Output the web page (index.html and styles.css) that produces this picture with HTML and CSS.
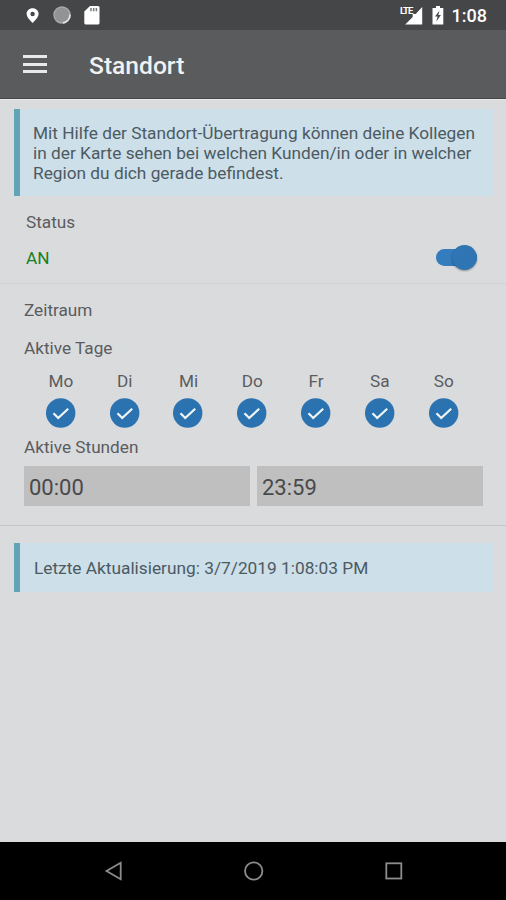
FILE: index.html
```html
<!DOCTYPE html>
<html lang="de">
<head>
<meta charset="utf-8">
<title>Standort</title>
<link rel="stylesheet" href="styles.css">
</head>
<body>
<svg class="defs" width="0" height="0" aria-hidden="true">
  <symbol id="check" viewBox="0 0 30 30"><circle cx="14.700" cy="15" r="14.700" fill="#2b72b0"/><path d="M7.500 15.200l4.700 4.800 10-9.300" fill="none" stroke="#f1f5f8" stroke-width="2.200"/></symbol>
</svg>
<div class="screen">
  <div class="statusbar">
    <svg class="status-left" width="120" height="30" viewBox="0 0 120 30">
      <path fill="#fff" fill-rule="evenodd" d="M32.600 8.200c-3.500 0-6 2.500-6 5.600 0 4 6 9.200 6 9.200s6-5.200 6-9.200c0-3.100-2.500-5.600-6-5.600zm0 3.600a2.200 2.200 0 1 1 0 4.400a2.200 2.200 0 0 1 0-4.400z"/>
      <circle cx="62" cy="15" r="8" fill="#929394"/>
      <circle cx="62" cy="15" r="8" fill="none" stroke="#a9aaaa" stroke-width="1.400"/>
      <path d="M70 14.500a8 8 0 0 1-7 8.400" fill="none" stroke="#e4e4e4" stroke-width="1.600"/>
      <path fill="#fff" d="M90 6h8q1.500 0 1.500 1.500v15.500q0 1.600-1.600 1.600H86q-1.700 0-1.700-1.600V11.500z"/>
      <path d="M91 8v3.200M93.700 8v3.200M96.400 8v3.200" stroke="#77787a" stroke-width="1.500"/>
    </svg>
    <div class="status-right">
      <span class="lte">LTE</span>
      <svg width="48" height="30" viewBox="0 0 48 30">
        <path fill="#fff" d="M21.200 7v17.500H4.200L11.700 17V14h3z"/>
        <path fill="#fff" d="M35 6h4v2h3.300v16.500H31.500V8H35z"/>
        <path fill="#454648" d="M38.500 10.500l-4.500 6h2.600l-1.300 5 4.600-6.500h-2.600z"/>
      </svg>
      <span class="clock">1:08</span>
    </div>
  </div>
  <header class="appbar">
    <div class="menu"><i></i><i></i><i></i></div>
    <h1>Standort</h1>
  </header>
  <main>
    <div class="note intro">Mit Hilfe der Standort-Übertragung können deine Kollegen<br>in der Karte sehen bei welchen Kunden/in oder in welcher<br>Region du dich gerade befindest.</div>
    <section class="status">
      <div class="label">Status</div>
      <div class="toggle-row"><span class="on">AN</span><span class="switch"></span></div>
    </section>
    <section class="period">
      <div class="label zeitraum">Zeitraum</div>
      <div class="label tage">Aktive Tage</div>
      <div class="days">
        <div class="day"><span>Mo</span><svg><use href="#check"/></svg></div>
        <div class="day"><span>Di</span><svg><use href="#check"/></svg></div>
        <div class="day"><span>Mi</span><svg><use href="#check"/></svg></div>
        <div class="day"><span>Do</span><svg><use href="#check"/></svg></div>
        <div class="day"><span>Fr</span><svg><use href="#check"/></svg></div>
        <div class="day"><span>Sa</span><svg><use href="#check"/></svg></div>
        <div class="day"><span>So</span><svg><use href="#check"/></svg></div>
      </div>
      <div class="label stunden">Aktive Stunden</div>
      <div class="hours"><div>00:00</div><div>23:59</div></div>
    </section>
    <div class="note update">Letzte Aktualisierung: 3/7/2019 1:08:03 PM</div>
  </main>
  <nav>
    <svg width="506" height="58" viewBox="0 0 506 58" fill="none" stroke="#8c8c8c" stroke-width="1.800">
      <path d="M120.700 20.700v16.600L106.500 29z"/>
      <circle cx="253.700" cy="29" r="8.700"/>
      <rect x="386.300" y="21.300" width="15" height="15.200"/>
    </svg>
  </nav>
</div>
</body>
</html>
```
FILE: styles.css
```css
* { box-sizing: border-box; }
body { margin: 0; font-family: Roboto, "Liberation Sans", sans-serif; background: #dadbdd; }
svg { display: block; }
.defs { position: absolute; }
.screen { width: 506px; height: 900px; display: flex; flex-direction: column; overflow: hidden; font-size: 17.2px; line-height: 20px; color: #5a5c5f; }
.statusbar { height: 30px; background: #454648; display: flex; justify-content: space-between; flex: none; }
.status-right { display: flex; padding-right: 19px; color: #fff; }
.lte { font-size: 9.5px; font-weight: 700; line-height: 10px; padding-top: 6px; letter-spacing: -0.9px; margin-right: -12px; }
.clock { font-size: 18px; font-weight: 500; line-height: 32px; margin-left: 3px; }
.appbar { height: 69px; flex: none; background: #5a5b5d; display: flex; align-items: center; padding: 2px 0 0 23px; border-bottom: 1px solid #454648; }
.menu { width: 24px; height: 18px; display: flex; flex-direction: column; justify-content: space-between; margin: 0 42px 2px 0; }
.menu i { height: 3px; background: #e7e9ea; }
h1 { margin: 2px 0 0; font-size: 24.600px; font-weight: 500; line-height: 30px; color: #f0f1f2; }
main { flex: 1; padding-top: 10px; border-top: 1px solid #e6e7e7; background: #dadbdd; }
.note { margin: 0 13px 0 14px; border-left: 6px solid #62a4b5; background: #cddfe8; color: #4c5a63; }
.intro { height: 87px; margin-top: -1px; padding: 14px 0 0 13px; white-space: nowrap; font-size: 17.280px; }
.status { height: 88px; padding: 16px 29px 0 26px; border-bottom: 1px solid #cfd0d2; }
.toggle-row { display: flex; justify-content: space-between; align-items: center; height: 26px; margin-top: 13px; }
.on { color: #16801f; }
.switch { width: 41px; height: 17px; border-radius: 9px; background: linear-gradient(90deg, #337cbd 50%, #2f73b1 50%); position: relative; top: -0.5px; }
.switch::after { content: ""; position: absolute; right: 0; top: -4px; width: 25px; height: 25px; border-radius: 50%; background: #2f74b3; box-shadow: 0 1px 2px rgba(0,0,0,.35); }
.period { height: 242px; padding: 16px 23px 0 24px; border-bottom: 1px solid #c5c6c8; }
.tage { margin-top: 18px; }
.days { display: grid; grid-template-columns: repeat(7, 63.8px); margin: 13px 0 0 5px; }
.day { display: flex; flex-direction: column; align-items: center; }
.day svg { width: 30px; height: 30px; margin-top: 7px; }
.stunden { margin-top: 9px; }
.hours { display: grid; grid-template-columns: 1fr 1fr; gap: 7px; margin-top: 9px; }
.hours div { height: 40px; background: #bfbfc0; font-size: 22px; line-height: 43px; padding-left: 5px; color: #48494b; }
.update { height: 49px; margin-top: 17px; padding: 15px 0 0 14px; font-size: 17.300px; }
nav { height: 58px; flex: none; background: #000; }
```
